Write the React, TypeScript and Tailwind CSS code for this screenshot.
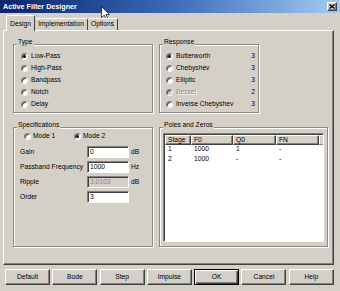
import React from 'react';

const types = ['Low-Pass', 'High-Pass', 'Bandpass', 'Notch', 'Delay'];

const responses = [
  { name: 'Butterworth', order: '3', checked: true },
  { name: 'Chebyshev', order: '3' },
  { name: 'Elliptic', order: '3' },
  { name: 'Bessel', order: '2', disabled: true },
  { name: 'Inverse Chebyshev', order: '3' },
];

const fields = [
  { label: 'Gain', value: '0', unit: 'dB' },
  { label: 'Passband Frequency', value: '1000', unit: 'Hz' },
  { label: 'Ripple', value: '3.0103', unit: 'dB', disabled: true },
  { label: 'Order', value: '3', unit: '' },
];

const stages = [
  ['1', '1000', '1', '-'],
  ['2', '1000', '-', '-'],
];

const columns = [
  { name: 'Stage', w: 'w-[26px]' },
  { name: 'F0', w: 'w-[42px]' },
  { name: 'Q0', w: 'w-[43px]' },
  { name: 'FN', w: 'w-[43px]' },
];

const buttons = ['Default', 'Bode', 'Step', 'Impulse', 'OK', 'Cancel', 'Help'];

function Radio({ checked, disabled }: { checked?: boolean; disabled?: boolean }) {
  return (
    <span
      className={`flex h-[7px] w-[7px] shrink-0 items-center justify-center rounded-full border border-t-[#808080] border-l-[#808080] border-r-[#f4f4f4] border-b-[#f4f4f4] shadow-[inset_1px_1px_0_#505050] ${
        disabled ? 'bg-[#d4d0c8]' : 'bg-white'
      }`}
    >
      {checked && <span className="h-[3px] w-[3px] rounded-full bg-black" />}
    </span>
  );
}

function Group({
  title,
  className,
  children,
}: {
  title: string;
  className: string;
  children: React.ReactNode;
}) {
  return (
    <div
      className={`flex flex-col border border-[#8c8a86] shadow-[inset_1px_1px_0_#fff,1px_1px_0_#fff] ${className}`}
    >
      <span className="-mt-[7px] ml-[3px] h-[8px] w-fit bg-[#d4d0c8] px-[1px] leading-[8px]">
        {title}
      </span>
      {children}
    </div>
  );
}

function Field({ value, disabled }: { value: string; disabled?: boolean }) {
  return (
    <div
      className={`flex h-[12px] w-[42px] items-center border border-t-[#808080] border-l-[#808080] border-r-white border-b-white pl-[2px] shadow-[inset_1px_1px_0_#404040] ${
        disabled ? 'bg-[#d4d0c8] text-[#8a8a8a]' : 'bg-white'
      }`}
    >
      {value}
    </div>
  );
}

export default function App() {
  return (
    <div className="relative flex h-[291px] w-[340px] flex-col overflow-hidden bg-[#d4d0c8] font-['Liberation_Sans',Arial,sans-serif] text-[6.7px] leading-none text-black">
      {/* title bar */}
      <div className="flex h-[13px] shrink-0 items-center justify-between bg-linear-to-r from-[#0a246a] via-[#3a6ab8] to-[#a6caf0] pl-[3px] pr-[3px]">
        <span className="text-[7.2px] font-bold text-white">Active Filter Designer</span>
        <span className="flex h-[9px] w-[10px] items-center justify-center border border-t-white border-l-white border-r-[#404040] border-b-[#404040] bg-[#d4d0c8] shadow-[inset_-1px_-1px_0_#808080]">
          <svg width="6" height="5" viewBox="0 0 6 5">
            <path d="M0.5 0.5 L5.5 4.5 M5.5 0.5 L0.5 4.5" stroke="#000" strokeWidth="1.3" />
          </svg>
        </span>
      </div>

      {/* tabs */}
      <div className="relative z-10 -mb-[1px] flex h-[18px] shrink-0 items-end pl-[6px]">
        <div className="flex h-[16px] w-[29px] items-center justify-center rounded-t-[2px] border-t border-l border-r border-t-white border-l-white border-r-[#404040] bg-[#d4d0c8] pt-[1px]">
          Design
        </div>
        <div className="mb-[1px] flex h-[12px] w-[53px] items-center justify-center rounded-t-[2px] border-t border-r border-t-white border-r-[#404040] bg-[#d4d0c8]">
          Implementation
        </div>
        <div className="mb-[1px] flex h-[12px] w-[30px] items-center justify-center rounded-t-[2px] border-t border-r border-t-white border-r-[#404040] bg-[#d4d0c8]">
          Options
        </div>
      </div>

      {/* tab panel */}
      <div className="ml-[3px] flex h-[235px] w-[331px] shrink-0 flex-col border border-t-white border-l-white border-r-[#404040] border-b-[#404040] pl-[9px] pt-[13px] shadow-[inset_-1px_-1px_0_#808080]">
        <div className="flex gap-[6px]">
          <Group title="Type" className="h-[69px] w-[140px]">
            <div className="mt-[4px] flex flex-col pl-[7px]">
              {types.map((t, i) => (
                <div key={t} className="flex h-[12px] items-center gap-[3px]">
                  <Radio checked={i === 0} />
                  {t}
                </div>
              ))}
            </div>
          </Group>
          <Group title="Response" className="h-[69px] w-[100px]">
            <div className="mt-[4px] flex flex-col pl-[6px] pr-[3px]">
              {responses.map((r) => (
                <div key={r.name} className="flex h-[12px] items-center gap-[3px]">
                  <Radio checked={r.checked} disabled={r.disabled} />
                  <span
                    className={r.disabled ? 'text-[#8a8a8a] [text-shadow:1px_1px_0_#fff]' : ''}
                  >
                    {r.name}
                  </span>
                  <span className="ml-auto">{r.order}</span>
                </div>
              ))}
            </div>
          </Group>
        </div>

        <div className="mt-[14px] flex gap-[6px]">
          <Group title="Specifications" className="h-[120px] w-[140px]">
            <div className="mt-[1px] flex h-[12px] items-center pl-[10px]">
              <span className="flex w-[50px] items-center gap-[2px]">
                <Radio />
                Mode 1
              </span>
              <span className="flex items-center gap-[2px]">
                <Radio checked />
                Mode 2
              </span>
            </div>
            <div className="mt-[4px] flex flex-col gap-[3px] pl-[6px]">
              {fields.map((f) => (
                <div key={f.label} className="flex h-[12px] items-center">
                  <span className="w-[67px]">{f.label}</span>
                  <Field value={f.value} disabled={f.disabled} />
                  <span className="ml-[2px]">{f.unit}</span>
                </div>
              ))}
            </div>
          </Group>
          <Group title="Poles and Zeros" className="h-[120px] w-[169px]">
            <div className="ml-[3px] mt-[4px] flex h-[109px] w-[161px] flex-col border border-t-[#808080] border-l-[#808080] border-r-white border-b-white bg-white shadow-[inset_1px_1px_0_#404040] pl-[1px] pt-[1px]">
              <div className="flex h-[10px] shrink-0">
                {columns.map((c) => (
                  <div
                    key={c.name}
                    className={`${c.w} flex items-center border border-t-white border-l-white border-r-[#404040] border-b-[#404040] bg-[#d4d0c8] pl-[2px] shadow-[inset_-1px_-1px_0_#808080]`}
                  >
                    {c.name}
                  </div>
                ))}
                <div className="flex-1 border-t border-l border-t-white border-l-white border-b border-b-[#808080] bg-[#d4d0c8]" />
              </div>
              {stages.map((row) => (
                <div key={row[0]} className="flex h-[9.5px] items-center">
                  {row.map((v, i) => (
                    <span key={i} className={`${columns[i].w} pl-[3px]`}>
                      {v}
                    </span>
                  ))}
                </div>
              ))}
            </div>
          </Group>
        </div>
      </div>

      {/* buttons */}
      <div className="mt-[4px] flex shrink-0 gap-[2.3px] pl-[5px]">
        {buttons.map((b) => (
          <div
            key={b}
            className={`flex h-[16px] w-[45px] items-center justify-center border ${
              b === 'OK'
                ? 'border-black shadow-[inset_1px_1px_0_#fff,inset_-1px_-1px_0_#404040,inset_-2px_-2px_0_#808080]'
                : 'border-t-white border-l-white border-r-[#404040] border-b-[#404040] shadow-[inset_-1px_-1px_0_#808080]'
            }`}
          >
            {b}
          </div>
        ))}
      </div>

      {/* mouse pointer */}
      <svg
        className="absolute left-[101px] top-[6px]"
        width="9"
        height="14"
        viewBox="0 0 12 19"
      >
        <path
          d="M0.5 0.5 L0.5 16 L4.3 12.4 L6.8 18.2 L9.2 17.1 L6.8 11.6 L11.5 11.6 Z"
          fill="#fff"
          stroke="#000"
          strokeWidth="1"
          strokeLinejoin="round"
        />
      </svg>
    </div>
  );
}
